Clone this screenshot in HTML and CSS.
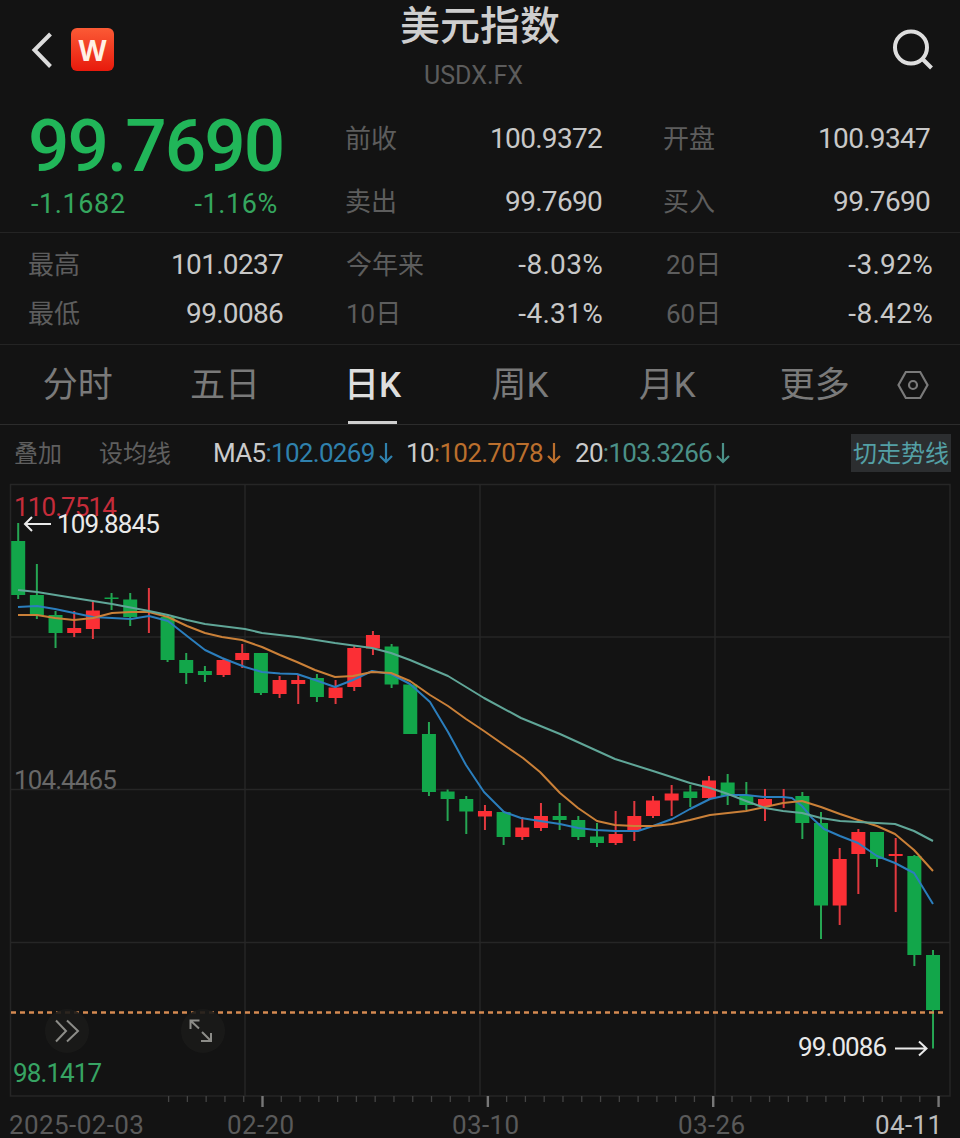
FILE: index.html
```html
<!DOCTYPE html>
<html lang="zh-CN">
<head>
    <meta charset="UTF-8">
    <meta name="viewport" content="width=device-width, initial-scale=1.0">
    <title>美元指数 USDX.FX</title>
    <link rel="stylesheet" href="styles.css">
</head>
<body>
    <header class="header">
        <div class="header-left">
            <svg class="back" width="24" height="40" viewBox="0 0 24 40"><path d="M21.500 4 L5.500 20 L21.500 36.500"/></svg>
            <div class="logo">W</div>
        </div>
        <div class="title">
            <h1>美元指数</h1>
            <p>USDX.FX</p>
        </div>
        <svg class="search" width="44" height="44" viewBox="0 0 44 44">
            <circle cx="20" cy="20.500" r="16"/>
            <path d="M31.500 32 L40.500 41"/>
        </svg>
    </header>

    <section class="quote">
        <div class="last">
            <div class="price">99.7690</div>
            <div class="change"><span>-1.1682</span><span>-1.16%</span></div>
        </div>
        <div class="pairs">
            <div class="pair"><span>前收</span><b>100.9372</b></div>
            <div class="pair"><span>卖出</span><b>99.7690</b></div>
        </div>
        <div class="pairs">
            <div class="pair"><span>开盘</span><b>100.9347</b></div>
            <div class="pair"><span>买入</span><b>99.7690</b></div>
        </div>
    </section>

    <section class="stats">
        <div class="pair"><span>最高</span><b>101.0237</b></div>
        <div class="pair"><span>今年来</span><b class="pct">-8.03%</b></div>
        <div class="pair"><span>20日</span><b class="pct">-3.92%</b></div>
        <div class="pair"><span>最低</span><b>99.0086</b></div>
        <div class="pair"><span>10日</span><b class="pct">-4.31%</b></div>
        <div class="pair"><span>60日</span><b class="pct">-8.42%</b></div>
    </section>

    <nav class="tabs">
        <a>分时</a>
        <a>五日</a>
        <a class="active">日K</a>
        <a>周K</a>
        <a>月K</a>
        <a>更多</a>
        <svg class="settings" width="32" height="32" viewBox="0 0 32 32">
            <path d="M8.800 3 H23.200 L30.500 16 L23.200 29 H8.800 L1.500 16 Z"/>
            <circle cx="16" cy="16" r="4"/>
        </svg>
    </nav>

    <div class="ma-bar">
        <span class="tool overlay">叠加</span>
        <span class="tool set-ma">设均线</span>
        <span class="ma ma5"><i>MA5</i>:102.0269<svg width="14" height="22" viewBox="0 0 14 22"><path d="M7 1 V20 M1 14 L7 20 L13 14"/></svg></span>
        <span class="ma ma10"><i>10</i>:102.7078<svg width="14" height="22" viewBox="0 0 14 22"><path d="M7 1 V20 M1 14 L7 20 L13 14"/></svg></span>
        <span class="ma ma20"><i>20</i>:103.3266<svg width="14" height="22" viewBox="0 0 14 22"><path d="M7 1 V20 M1 14 L7 20 L13 14"/></svg></span>
        <span class="switch">切走势线</span>
    </div>

    <svg class="chart" width="960" height="658" viewBox="0 480 960 658">
        <path class="grid" d="M10.500 484.500 H950 V1096 H10.500 Z M10 637 H950 M10 789.500 H950 M10 942.500 H950 M245 484 V1096 M480 484 V1096 M715 484 V1096"/>
        <text class="label top" x="14" y="516">110.7514</text>
        <text class="label mid" x="14" y="789">104.4465</text>
        <g id="candles"></g>
        <g id="lines"></g>
        <path class="last-line" d="M11 1012.500 H946"/>

        <g class="round">
            <circle cx="67" cy="1031" r="22"/>
            <path d="M56 1020.500 L66 1031 L56 1041.500 M67 1020.500 L78 1031 L67 1041.500"/>
        </g>
        <g class="round">
            <circle cx="203" cy="1031" r="22"/>
            <path d="M190.500 1029 V1020.500 H199.500 M191 1021 L199 1028.500 M211 1033 V1041 H201 M202 1032 L210.500 1040.500"/>
        </g>

        <text class="label bottom" x="13" y="1082">98.1417</text>
        <text class="label mark" x="57" y="533">109.8845</text>
        <path class="arrow" d="M51 524 H25 M32 517 L25 524 L32 531"/>
        <text class="label mark" x="798" y="1056">99.0086</text>
        <path class="arrow" d="M895 1048.500 H926 M919 1041.500 L926.500 1048.500 L919 1055.500"/>

        <g id="ticks"></g>
        <text class="label date" x="9" y="1134">2025-02-03</text>
        <text class="label date" x="227" y="1134">02-20</text>
        <text class="label date" x="452" y="1134">03-10</text>
        <text class="label date" x="678" y="1134">03-26</text>
        <text class="label date now" x="875" y="1134">04-11</text>
    </svg>

    <script>
        // direction, high, body top, body bottom, low
        const candles = [
            ['g', 523, 541, 595, 599], ['g', 564, 595, 615, 619], ['g', 611, 615, 633, 648],
            ['r', 611, 628, 633, 637], ['r', 600, 610.5, 629, 639], ['g', 593, 597.5, 599, 610],
            ['g', 593, 599.5, 617, 626], ['r', 588, 614, 615, 633], ['g', 615, 617, 660, 662],
            ['g', 653, 660, 673, 684], ['g', 666, 671, 675, 682], ['r', 658, 660, 675, 677],
            ['r', 644, 653, 660, 668], ['g', 653, 653, 693, 695], ['r', 676, 680, 694, 698],
            ['r', 675, 680, 684, 704], ['g', 674, 678, 697, 702], ['r', 680, 687.5, 698, 704],
            ['r', 645, 648, 687, 691], ['r', 631, 635, 648.5, 655], ['g', 644, 646.5, 684.5, 688],
            ['g', 684, 684.5, 734, 734], ['g', 722, 734, 792, 796], ['g', 789.5, 791.5, 799, 821],
            ['g', 796, 799, 811.5, 834], ['r', 805, 811, 816.5, 830], ['g', 811, 812, 837, 845],
            ['r', 817, 827.5, 837, 840], ['r', 803, 816, 828, 831], ['g', 803, 816, 820, 830],
            ['g', 816, 820, 837, 840], ['g', 823, 836.5, 843, 847], ['r', 811, 834, 843, 845],
            ['r', 801, 816, 830, 841], ['r', 796, 800.5, 816, 818], ['r', 785, 793.5, 800.5, 816],
            ['g', 785, 791.5, 798, 807], ['r', 776, 780.5, 798, 799], ['g', 774, 782.5, 796, 805],
            ['g', 782, 796, 805, 810], ['r', 789, 799, 806, 821], ['r', 789, 799, 800, 808],
            ['g', 792, 796, 823, 839], ['g', 812, 823, 905.5, 939], ['r', 848, 859, 905.5, 925],
            ['r', 829, 832, 854, 894], ['g', 832, 832, 859, 867], ['r', 838, 854, 856, 912],
            ['g', 855, 856, 955, 966], ['g', 950, 955, 1010, 1048.5]
        ];

        const lines = {
            ma5: '18,607 37,606 55,609 74,613 93,617 112,618 131,619 149,616 168,621 187,636 205,650 222,658 245,667 262,672 280,673.500 297,674 315,680 335,687 353,680 372,671 391,674 410,684 430,702 448,732 466,765 484,792 504,812 521,818 540,821 560,824 578,828 596,830 615,831 638,831 653,826 672,819 690,809 710,799 728,795 746,795 765,797 783,797 792,798 802,806 812,818 824,829 840,836 858,843 877,856 895,863 914,873 933,904',
            ma10: '18,615 37,615 55,618 74,620 93,618 112,613 131,612 149,612 168,617 187,626 205,633 222,637 242,640 262,647 280,655 297,662 315,670 335,677 353,676 372,672 391,673 410,681 430,695 448,706 466,719 484,731 504,745 523,758 540,772 560,793 578,808 597,821 615,825 634,826 653,826 672,824 690,820 710,815 728,813 746,811 765,807 783,803 802,801 821,807 840,814 858,820 877,826 895,834 914,850 933,871',
            ma20: '18,590 37,592 74,598 112,604 149,611 168,615 187,620 205,624 245,629 262,633 297,637 335,643 372,648 391,653 410,660 448,676 484,698 521,718 560,734 615,759 653,771 690,783 710,788 728,794 746,801 765,808 783,811 802,813 821,818 840,821 877,823 895,824 914,831 933,841'
        };

        const step = 18.67;
        document.getElementById('candles').innerHTML = candles.map(([dir, high, top, bottom, low], i) => {
            const x = 18.2 + i * step;
            const body = i === 7 || i === 41 ? '' : `<rect x="${x - 7}" y="${top}" width="14" height="${bottom - top}"/>`;
            return `<g class="${dir}"><path d="M${x} ${high} V${low}"/>${body}</g>`;
        }).join('');

        document.getElementById('lines').innerHTML = Object.keys(lines).map(name =>
            `<polyline class="line ${name}-line" points="${lines[name]}"/>`).join('');

        // one tick per day, a longer one every 12 days
        let ticks = '';
        for (let i = -5; i <= 36; i++) {
            const major = i % 12 === 0;
            ticks += `<path class="${major ? 'major' : 'minor'}" d="M${262.5 + i * 18.78} 1096 V${major ? 1107 : 1102}"/>`;
        }
        document.getElementById('ticks').innerHTML = ticks;
    </script>
</body>
</html>
```

FILE: styles.css
```css
* {
    box-sizing: border-box;
}

body {
    margin: 0;
    width: 960px;
    height: 1138px;
    overflow: hidden;
    background: #131313;
    color: #c8c8c8;
    font-family: Roboto, "Noto Sans CJK SC", sans-serif;
}

.header {
    display: grid;
    grid-template-columns: 300px 1fr 300px;
    height: 106px;
}

.header-left {
    display: flex;
    align-items: flex-start;
    padding: 28px 0 0 29px;
}

.back {
    margin-top: 2px;
    fill: none;
    stroke: #dcdcdc;
    stroke-width: 4;
}

.logo {
    width: 43px;
    height: 43px;
    margin-left: 18px;
    border-radius: 6px;
    background: linear-gradient(#fb5a35, #e81a0c);
    color: #fff0e4;
    font: bold 29px/43px "Noto Sans", sans-serif;
    text-align: center;
}

.title {
    padding-top: 3px;
    text-align: center;
}

.title h1 {
    margin: 0;
    color: #cecece;
    font-size: 40px;
    font-weight: 500;
    line-height: 48px;
}

.title p {
    margin: 10px 0 0;
    padding-right: 13px;
    color: #5c5c5c;
    font-size: 25px;
    line-height: 30px;
}

.search {
    justify-self: end;
    margin: 27px 25px 0 0;
    fill: none;
    stroke: #dedede;
    stroke-width: 4;
}

.quote {
    display: grid;
    grid-template-columns: 255px 257px 267px;
    column-gap: 62px;
    height: 127px;
    padding-left: 28px;
    border-bottom: 1px solid #242424;
}

.quote .pairs:last-child {
    margin: 0 1px 0 -1px;
}

.price {
    height: 80px;
    color: #21b659;
    font-size: 73px;
    font-weight: 500;
    letter-spacing: -2px;
    line-height: 80px;
}

.change {
    display: flex;
    justify-content: space-between;
    padding: 0 5px 0 3px;
    color: #35a75f;
    font-size: 27px;
    letter-spacing: 0.6px;
    line-height: 36px;
}

.pair {
    display: flex;
    justify-content: space-between;
    align-items: center;
    height: 49px;
}

.pairs .pair {
    height: 63px;
    padding-top: 2px;
}

.pair span {
    padding-bottom: 4px;
    color: #5d5d5d;
    font-size: 26px;
}

.pair b {
    font-size: 28px;
    font-weight: 400;
    letter-spacing: -0.7px;
}

.pair .pct {
    letter-spacing: 0.3px;
}

.stats {
    display: grid;
    grid-template-columns: 255px 257px 267px;
    align-content: start;
    column-gap: 63px;
    height: 112px;
    padding: 7px 0 0 28px;
    border-bottom: 1px solid #242424;
}

.tabs {
    display: flex;
    align-items: center;
    height: 80px;
    padding-left: 4px;
    border-bottom: 1px solid #2c2c2c;
}

.tabs a {
    display: flex;
    flex-direction: column;
    align-items: center;
    width: 147.4px;
    height: 79px;
    padding-top: 2px;
    color: #7a7a7a;
    font-size: 35px;
    line-height: 78px;
}

.tabs .active {
    color: #dedede;
    font-weight: 500;
}

.tabs .active::after {
    content: "";
    width: 49px;
    height: 3px;
    margin-top: -4px;
    background: #cfcfcf;
}

.settings {
    margin-left: 9px;
    fill: none;
    stroke: #7a7a7a;
    stroke-width: 2.2;
}

.ma-bar {
    display: flex;
    align-items: center;
    height: 55px;
    padding: 0 9px 0 14px;
    font-size: 26px;
}

.tool {
    padding-bottom: 2px;
    color: #5f5f5f;
    font-size: 24px;
}

.overlay {
    width: 85px;
}

.set-ma {
    width: 114px;
}

.ma {
    display: flex;
    align-items: center;
    letter-spacing: -0.7px;
    white-space: nowrap;
}

.ma i {
    color: #cbcbcb;
    font-style: normal;
}

.ma svg {
    margin-left: 4px;
    fill: none;
    stroke: currentColor;
    stroke-width: 2.2;
}

.ma5 {
    width: 193px;
    color: #2f81ad;
}

.ma10 {
    width: 169px;
    color: #bb6f2d;
}

.ma20 {
    color: #4b9088;
}

.switch {
    width: 100px;
    height: 38px;
    margin-left: auto;
    background: #2c2e30;
    color: #54a0a6;
    font-size: 24px;
    line-height: 40px;
    text-align: center;
}

.chart {
    display: block;
}

.grid {
    fill: none;
    stroke: #262626;
    stroke-width: 1.5;
}

.g {
    fill: #12a64a;
    stroke: #26a653;
}

.r {
    fill: #fb2f35;
    stroke: #e2393f;
}

.g path,
.r path {
    stroke-width: 2;
}

.g rect,
.r rect {
    stroke: none;
}

.line {
    fill: none;
    stroke-width: 2;
    stroke-linejoin: round;
}

.ma5-line {
    stroke: #2b7ebd;
}

.ma10-line {
    stroke: #ca8038;
}

.ma20-line {
    stroke: #60a698;
}

.last-line {
    stroke: #d58a52;
    stroke-width: 2.4;
    stroke-dasharray: 5 4;
}

.round circle {
    fill: #1b1b1a;
    fill-opacity: 0.9;
}

.round path {
    fill: none;
    stroke: #8c8c88;
    stroke-width: 2;
}

.label {
    font-size: 26px;
    letter-spacing: -0.9px;
}

.top {
    fill: #c52c3a;
}

.mid {
    fill: #686868;
}

.bottom {
    fill: #37a463;
}

.mark {
    fill: #e9e9e9;
}

.arrow {
    fill: none;
    stroke: #e9e9e9;
    stroke-width: 2;
}

.date {
    fill: #5a5a5a;
    letter-spacing: 0.4px;
}

.now {
    fill: #bdbdbd;
}

.minor {
    stroke: #444;
    stroke-width: 1.3;
}

.major {
    stroke: #777;
    stroke-width: 2.4;
}
```
